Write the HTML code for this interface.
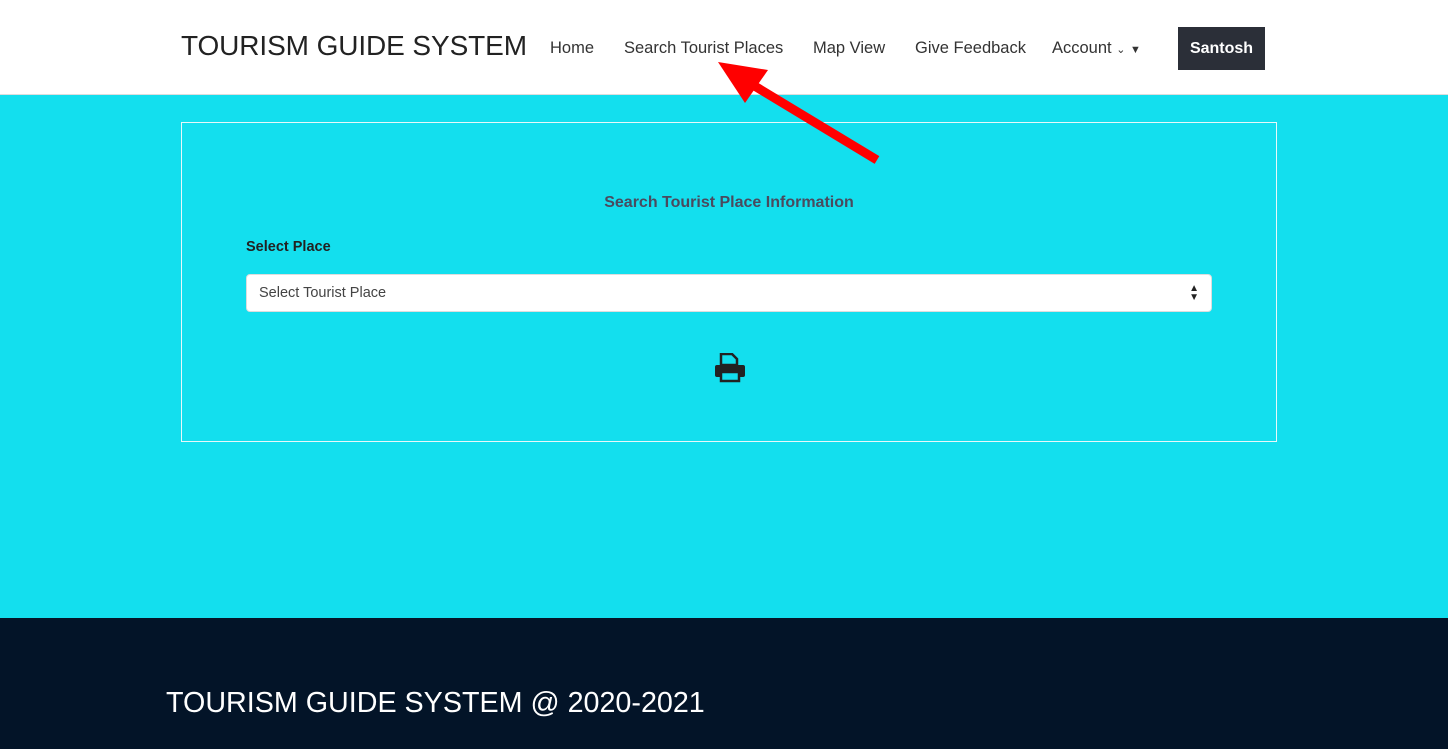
<!DOCTYPE html>
<html><head><meta charset="utf-8"><style>
*{margin:0;padding:0;box-sizing:border-box}
body{width:1448px;height:749px;overflow:hidden;font-family:"Liberation Sans",sans-serif;background:#13dfee;position:relative}
.nav{position:absolute;left:0;top:0;width:1448px;height:95px;background:#fff;border-bottom:1px solid #ddd}
.brand{position:absolute;left:181px;top:30px;font-size:28px;color:#222;letter-spacing:-0.1px}
.nl{position:absolute;top:39px;font-size:16.5px;color:#333}
.btn{position:absolute;left:1178px;top:27px;width:87px;height:43px;background:#2b2f38;color:#fff;font-weight:bold;font-size:16px;text-align:center;line-height:43px}
.box{position:absolute;left:181px;top:122px;width:1096px;height:320px;border:1px solid #e8f8fa}
.title{position:absolute;left:0;width:100%;top:71px;text-align:center;font-weight:bold;font-size:16px;color:#4a4a5e}
.lbl{position:absolute;left:64px;top:116px;font-weight:bold;font-size:14.5px;color:#222}
.sel{position:absolute;left:64px;top:151px;width:966px;height:38px;background:#fff;border-radius:4px;border:1px solid #ddd;font-size:14.5px;color:#444;padding:10px 12px}
.foot{position:absolute;left:0;top:618px;width:1448px;height:131px;background:#031428}
.ft{position:absolute;left:166px;top:69px;color:#fff;font-size:28.7px}
</style></head><body>
<div class="nav">
<div class="brand">TOURISM GUIDE SYSTEM</div>
<div class="nl" style="left:550px">Home</div>
<div class="nl" style="left:624px">Search Tourist Places</div>
<div class="nl" style="left:813px">Map View</div>
<div class="nl" style="left:915px">Give Feedback</div>
<div class="nl" style="left:1052px">Account <span style="font-size:11px">&#8964;</span> <span style="font-size:11px">&#9660;</span></div>
<div class="btn">Santosh</div>
</div>
<div class="box">
<div class="title">Search Tourist Place Information</div>
<div class="lbl">Select Place</div>
<div class="sel">Select Tourist Place<span style="position:absolute;right:12px;top:9px;font-size:10px;line-height:9px;color:#222">▲<br>▼</span></div>
<svg style="position:absolute;left:532px;top:230px" width="32" height="30" viewBox="0 0 32 30">
<path d="M7 1h11l5 5v6H7z" fill="#13dfee" stroke="#222" stroke-width="2.5"/>
<rect x="1" y="12" width="30" height="12" rx="2" fill="#222"/>
<rect x="7" y="19" width="18" height="9" fill="#13dfee" stroke="#222" stroke-width="2.5"/>
</svg>
</div>
<svg style="position:absolute;left:0;top:0" width="1448" height="200">
<line x1="877" y1="160" x2="748" y2="82" stroke="#f00" stroke-width="9"/>
<polygon points="718,62 768,70 745,103" fill="#f00"/>
</svg>
<div class="foot"><div class="ft">TOURISM GUIDE SYSTEM @ 2020-2021</div></div>
</body></html>
